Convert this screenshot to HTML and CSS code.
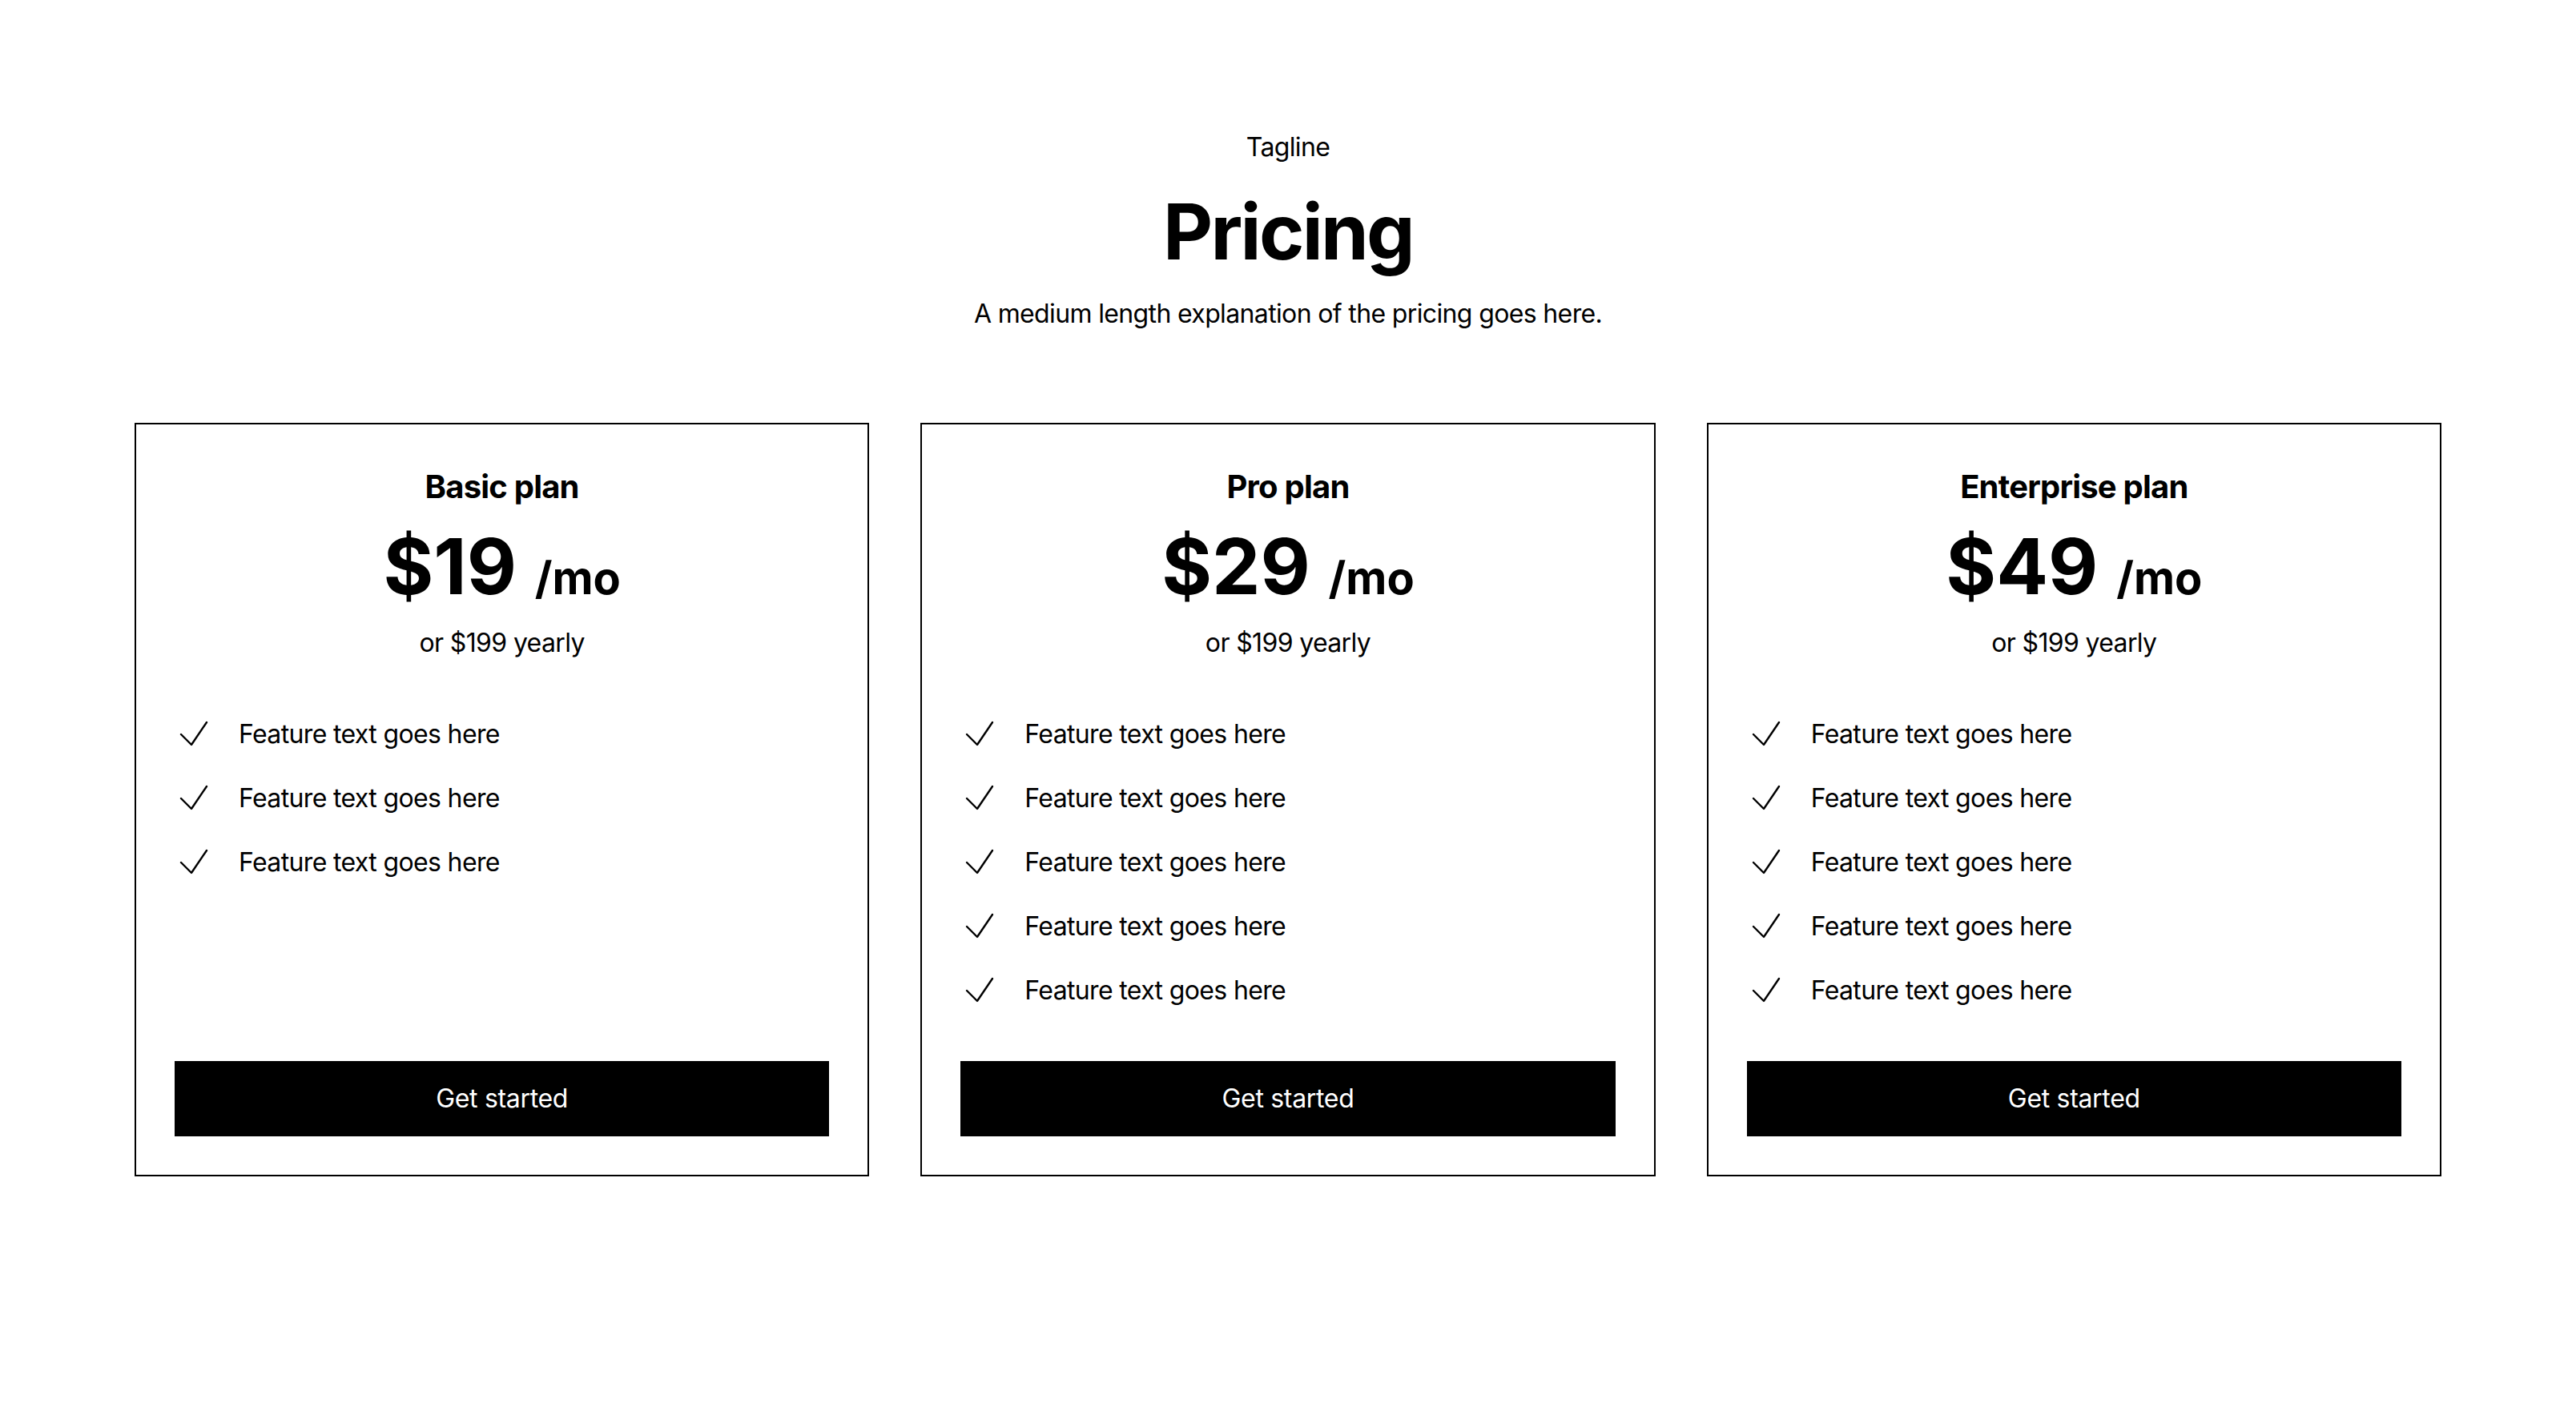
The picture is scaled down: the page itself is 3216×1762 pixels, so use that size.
FILE: index.html
```html
<!DOCTYPE html>
<html lang="en">
<head>
<meta charset="utf-8">
<title>Pricing</title>
<link rel="stylesheet" href="styles.css">
</head>
<body>
<section class="pricing">
  <header class="pricing-header">
    <p class="tagline">Tagline</p>
    <h2 class="title">Pricing</h2>
    <p class="lead">A medium length explanation of the pricing goes here.</p>
  </header>
  <div class="plans">
    <article class="plan">
      <div class="plan-top">
        <div class="plan-head">
          <h3 class="plan-name">Basic plan</h3>
          <p class="plan-price"><span class="amount">$19</span> <span class="period">/mo</span></p>
          <p class="plan-yearly">or $199 yearly</p>
        </div>
        <ul class="features">
          <li class="feature"><svg viewBox="0 0 24 24" fill="none" stroke="currentColor" stroke-width="1.2" stroke-linecap="round" stroke-linejoin="round"><path d="M4 12l6.5 6.5L20 4.5"/></svg><span>Feature text goes here</span></li>
          <li class="feature"><svg viewBox="0 0 24 24" fill="none" stroke="currentColor" stroke-width="1.2" stroke-linecap="round" stroke-linejoin="round"><path d="M4 12l6.5 6.5L20 4.5"/></svg><span>Feature text goes here</span></li>
          <li class="feature"><svg viewBox="0 0 24 24" fill="none" stroke="currentColor" stroke-width="1.2" stroke-linecap="round" stroke-linejoin="round"><path d="M4 12l6.5 6.5L20 4.5"/></svg><span>Feature text goes here</span></li>
        </ul>
      </div>
      <a class="cta" href="#">Get started</a>
    </article>
    <article class="plan">
      <div class="plan-top">
        <div class="plan-head">
          <h3 class="plan-name">Pro plan</h3>
          <p class="plan-price"><span class="amount">$29</span> <span class="period">/mo</span></p>
          <p class="plan-yearly">or $199 yearly</p>
        </div>
        <ul class="features">
          <li class="feature"><svg viewBox="0 0 24 24" fill="none" stroke="currentColor" stroke-width="1.2" stroke-linecap="round" stroke-linejoin="round"><path d="M4 12l6.5 6.5L20 4.5"/></svg><span>Feature text goes here</span></li>
          <li class="feature"><svg viewBox="0 0 24 24" fill="none" stroke="currentColor" stroke-width="1.2" stroke-linecap="round" stroke-linejoin="round"><path d="M4 12l6.5 6.5L20 4.5"/></svg><span>Feature text goes here</span></li>
          <li class="feature"><svg viewBox="0 0 24 24" fill="none" stroke="currentColor" stroke-width="1.2" stroke-linecap="round" stroke-linejoin="round"><path d="M4 12l6.5 6.5L20 4.5"/></svg><span>Feature text goes here</span></li>
          <li class="feature"><svg viewBox="0 0 24 24" fill="none" stroke="currentColor" stroke-width="1.2" stroke-linecap="round" stroke-linejoin="round"><path d="M4 12l6.5 6.5L20 4.5"/></svg><span>Feature text goes here</span></li>
          <li class="feature"><svg viewBox="0 0 24 24" fill="none" stroke="currentColor" stroke-width="1.2" stroke-linecap="round" stroke-linejoin="round"><path d="M4 12l6.5 6.5L20 4.5"/></svg><span>Feature text goes here</span></li>
        </ul>
      </div>
      <a class="cta" href="#">Get started</a>
    </article>
    <article class="plan">
      <div class="plan-top">
        <div class="plan-head">
          <h3 class="plan-name">Enterprise plan</h3>
          <p class="plan-price"><span class="amount">$49</span> <span class="period">/mo</span></p>
          <p class="plan-yearly">or $199 yearly</p>
        </div>
        <ul class="features">
          <li class="feature"><svg viewBox="0 0 24 24" fill="none" stroke="currentColor" stroke-width="1.2" stroke-linecap="round" stroke-linejoin="round"><path d="M4 12l6.5 6.5L20 4.5"/></svg><span>Feature text goes here</span></li>
          <li class="feature"><svg viewBox="0 0 24 24" fill="none" stroke="currentColor" stroke-width="1.2" stroke-linecap="round" stroke-linejoin="round"><path d="M4 12l6.5 6.5L20 4.5"/></svg><span>Feature text goes here</span></li>
          <li class="feature"><svg viewBox="0 0 24 24" fill="none" stroke="currentColor" stroke-width="1.2" stroke-linecap="round" stroke-linejoin="round"><path d="M4 12l6.5 6.5L20 4.5"/></svg><span>Feature text goes here</span></li>
          <li class="feature"><svg viewBox="0 0 24 24" fill="none" stroke="currentColor" stroke-width="1.2" stroke-linecap="round" stroke-linejoin="round"><path d="M4 12l6.5 6.5L20 4.5"/></svg><span>Feature text goes here</span></li>
          <li class="feature"><svg viewBox="0 0 24 24" fill="none" stroke="currentColor" stroke-width="1.2" stroke-linecap="round" stroke-linejoin="round"><path d="M4 12l6.5 6.5L20 4.5"/></svg><span>Feature text goes here</span></li>
        </ul>
      </div>
      <a class="cta" href="#">Get started</a>
    </article>
  </div>
</section>
</body>
</html>
```

FILE: styles.css
```css
* {
  box-sizing: border-box;
  margin: 0;
  padding: 0;
}

body {
  font-family: Inter, "Noto Sans", sans-serif;
  color: #000;
  background: #fff;
}

.pricing {
  padding: 160px 168px 0;
}

.pricing-header {
  display: flex;
  flex-direction: column;
  align-items: center;
  text-align: center;
}

.tagline {
  font-size: 32px;
  line-height: 48px;
  letter-spacing: -0.02em;
}

.title {
  font-size: 96px;
  line-height: 1.2;
  font-weight: 700;
  letter-spacing: -0.028em;
  margin-top: 24px;
}

.lead {
  font-size: 32px;
  line-height: 48px;
  letter-spacing: -0.02em;
  margin-top: 21px;
}

.plans {
  display: grid;
  grid-template-columns: repeat(3, 1fr);
  gap: 64px;
  margin-top: 112px;
}

.plan {
  border: 2px solid #000;
  padding: 48px;
  display: flex;
  flex-direction: column;
  justify-content: space-between;
  gap: 64px;
}

.plan-head {
  text-align: center;
}

.plan-name {
  font-size: 40px;
  line-height: 60px;
  font-weight: 700;
  letter-spacing: -0.02em;
}

.plan-price {
  font-size: 96px;
  line-height: 1.2;
  font-weight: 700;
  margin-top: 12px;
}

.period {
  font-size: 56px;
}

.plan-yearly {
  font-size: 32px;
  line-height: 48px;
  letter-spacing: -0.02em;
  margin-top: 14px;
}

.features {
  list-style: none;
  margin-top: 66px;
  display: flex;
  flex-direction: column;
  gap: 32px;
}

.feature {
  display: flex;
  align-items: center;
  gap: 32px;
  font-size: 32px;
  line-height: 48px;
  letter-spacing: -0.02em;
}

.feature svg {
  width: 48px;
  height: 48px;
  flex: none;
}

.cta {
  display: block;
  background: #000;
  color: #fff;
  text-align: center;
  font-size: 32px;
  line-height: 48px;
  letter-spacing: -0.01em;
  padding: 23px 24px;
  text-decoration: none;
}
```
